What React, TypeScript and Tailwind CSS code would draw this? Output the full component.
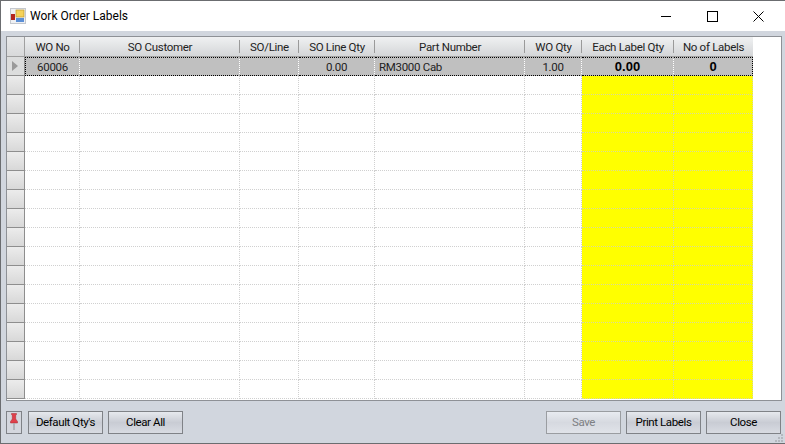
const cols = [
  { w: 'w-[55px]', t: 'WO No' },
  { w: 'w-[160px]', t: 'SO Customer' },
  { w: 'w-[59px]', t: 'SO/Line' },
  { w: 'w-[76px]', t: 'SO Line Qty' },
  { w: 'w-[150px]', t: 'Part Number' },
  { w: 'w-[57px]', t: 'WO Qty' },
  { w: 'w-[92px]', t: 'Each Label Qty' },
  { w: 'w-[79px]', t: 'No of Labels' },
];

const first = [
  { t: '60006', c: 'text-center' },
  { t: '', c: '' },
  { t: '', c: '' },
  { t: '0.00', c: 'text-center' },
  { t: 'RM3000 Cab', c: 'text-left pl-[4px]' },
  { t: '1.00', c: 'text-center' },
  { t: '0.00', c: "text-center font-['Liberation_Sans',sans-serif] font-bold text-[13px] tracking-normal text-black" },
  { t: '0', c: "text-center font-['Liberation_Sans',sans-serif] font-bold text-[13px] tracking-normal text-black" },
];

const emptyRows = Array.from({ length: 17 }, (_, i) => i);

function Btn({ label, disabled }: { label: string; disabled?: boolean }) {
  return (
    <button
      className={`w-[75px] h-[23px] pt-px border bg-gradient-to-b text-[11.5px] tracking-[-0.4px] ${
        disabled
          ? 'border-[#9a9da1] from-[#e8ebf0] via-[#d6d9e0] to-[#e0e3e9] text-[#7d7f83]'
          : 'border-[#7f8287] from-[#e6e9ee] via-[#c9ccd4] to-[#d8dbe2] text-black'
      }`}
    >
      {label}
    </button>
  );
}

export default function App() {
  return (
    <div className="relative w-[785px] h-[444px] overflow-hidden bg-[#d1d6de] border-l border-t border-b border-[#6b6d70] flex flex-col font-['Roboto',sans-serif] text-[11.5px] tracking-[-0.3px] text-[#222222]">
      <div className="h-[30px] bg-white flex items-center shrink-0">
        <svg width="16" height="16" viewBox="0 0 16 16" className="ml-[9px]">
          <rect x="0.5" y="0.5" width="15" height="15" fill="#eef0f3" stroke="#c4c8ce" />
          <rect x="1" y="6" width="4" height="6" fill="#b3261e" />
          <rect x="6" y="2" width="8" height="7" fill="#f5d25a" stroke="#c09a2c" strokeWidth="0.7" />
          <rect x="6" y="10" width="8" height="4" fill="#5b8fd6" />
        </svg>
        <span className="ml-[4px] text-[12px] tracking-normal text-black">Work Order Labels</span>
        <div className="ml-auto flex items-center">
          <div className="w-[46px] flex justify-center">
            <div className="w-[10px] h-px bg-black" />
          </div>
          <div className="w-[46px] flex justify-center">
            <div className="w-[11px] h-[11px] border border-black" />
          </div>
          <div className="w-[46px] flex justify-center mr-[4px]">
            <svg width="11" height="11" viewBox="0 0 11 11">
              <path d="M0.5 0.5L10.5 10.5M10.5 0.5L0.5 10.5" stroke="#000" strokeWidth="1" fill="none" />
            </svg>
          </div>
        </div>
      </div>

      <div className="mt-[5px] ml-[5px] mr-[3px] h-[365px] border border-[#8e9196] bg-white shrink-0 overflow-hidden">
        <div className="flex w-fit h-[20px] bg-gradient-to-b from-[#f0f1f2] to-[#d4d6d8] border-b border-[#a0a0a0]">
          <div className="w-[18px] border-r border-[#a0a0a0] bg-gradient-to-b from-[#e8e9ea] to-[#d8d9da]" />
          {cols.map((c, i) => (
            <div key={c.t} className={`${c.w} flex items-center justify-center relative pt-[2px]`}>
              <span>{c.t}</span>
              {i < cols.length - 1 && (
                <span className="absolute right-0 top-[3px] h-[13px] w-px bg-[#9a9a9a]" />
              )}
            </div>
          ))}
        </div>

        <div className="flex h-[19px]">
          <div className="w-[18px] border-r border-b border-[#8e8e8e] bg-[#dcdddd] flex items-center pl-[5px]">
            <svg width="6" height="10" viewBox="0 0 6 10">
              <path d="M0 0L6 5L0 10Z" fill="#9a9a9a" />
            </svg>
          </div>
          {cols.map((c, i) => (
            <div
              key={c.t}
              className={`${c.w} ${first[i].c} bg-[#c0c0c0] border-y border-dotted border-y-black leading-[18px] ${i === 0 ? 'border-l border-l-black' : ''} ${i === cols.length - 1 ? 'border-r border-r-black' : 'border-r border-r-white'}`}
            >
              {first[i].t}
            </div>
          ))}
        </div>

        {emptyRows.map((r) => (
          <div key={r} className="flex h-[19px]">
            <div className="w-[18px] border-r border-b border-[#8e8e8e] bg-gradient-to-b from-[#ececec] to-[#d8d8d8]" />
            {cols.map((c, i) => (
              <div
                key={c.t}
                className={`${c.w} border-b border-r border-dotted ${i >= 6 ? 'bg-[#ffff00] border-[#d8d8a0]' : 'border-[#d0d0d0]'}`}
              />
            ))}
          </div>
        ))}
      </div>

      <div className="flex items-center mt-[10px] ml-[5px] mr-[4px]">
        <div className="w-[16px] h-[23px] border border-[#7f8287] bg-[#d4d7de] flex items-center justify-center">
          <svg width="10" height="19" viewBox="0 0 10 19">
            <path d="M2.5 0.5H7.5V1.5L6.7 2.5V6L8.5 8.5V10H1.5V8.5L3.3 6V2.5L2.5 1.5Z" fill="#e0404b" stroke="#a52a33" strokeWidth="0.5" />
            <rect x="4.3" y="10" width="1.4" height="7" fill="#a3a6ab" />
          </svg>
        </div>
        <div className="flex gap-[5px] ml-[6px]">
          <Btn label="Default Qty's" />
          <Btn label="Clear All" />
        </div>
        <div className="ml-auto flex gap-[5px]">
          <Btn label="Save" disabled />
          <Btn label="Print Labels" />
          <Btn label="Close" />
        </div>
      </div>

      <svg width="10" height="10" viewBox="0 0 10 10" className="absolute right-[1px] bottom-0">
        <path d="M7 1h2v2H7zM4 4h2v2H4zM7 4h2v2H7zM1 7h2v2H1zM4 7h2v2H4zM7 7h2v2H7z" fill="#b4b8bf" />
      </svg>
    </div>
  );
}
